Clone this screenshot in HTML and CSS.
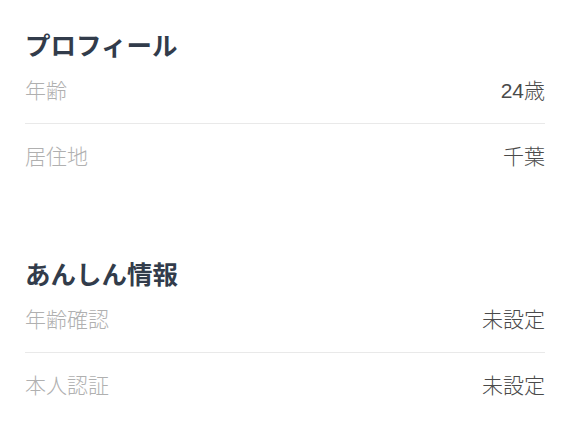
FILE: index.html
```html
<!DOCTYPE html>
<html lang="ja">
<head>
<meta charset="utf-8">
<link rel="stylesheet" href="styles.css">
</head>
<body>
<div class="page">
  <section class="section">
    <h2 class="title">プロフィール</h2>
    <div class="row"><span class="label">年齢</span><span class="value">24歳</span></div>
    <div class="row"><span class="label">居住地</span><span class="value">千葉</span></div>
  </section>
  <section class="section">
    <h2 class="title">あんしん情報</h2>
    <div class="row"><span class="label">年齢確認</span><span class="value">未設定</span></div>
    <div class="row"><span class="label">本人認証</span><span class="value">未設定</span></div>
  </section>
</div>
</body>
</html>
```

FILE: styles.css
```css
html, body {
  margin: 0;
  padding: 0;
  background: #ffffff;
}
.page {
  font-family: "Liberation Sans", "Noto Sans CJK JP", sans-serif;
  padding: 31px 25px 0 25px;
  display: flex;
  flex-direction: column;
  gap: 71px;
}
.section {
  display: flex;
  flex-direction: column;
}
.title {
  margin: 0;
  font-family: "Noto Sans CJK JP", sans-serif;
  font-size: 25.5px;
  line-height: 26px;
  font-weight: 700;
  color: #323c4b;
}
.row {
  height: 66px;
  box-sizing: border-box;
  padding-bottom: 3px;
  display: flex;
  align-items: center;
  justify-content: space-between;
  font-size: 21px;
  font-weight: 300;
}
.row + .row {
  border-top: 1px solid #e9e9e9;
}
.label {
  color: #b0b0b0;
}
.value {
  color: #4a4a4a;
}
```
